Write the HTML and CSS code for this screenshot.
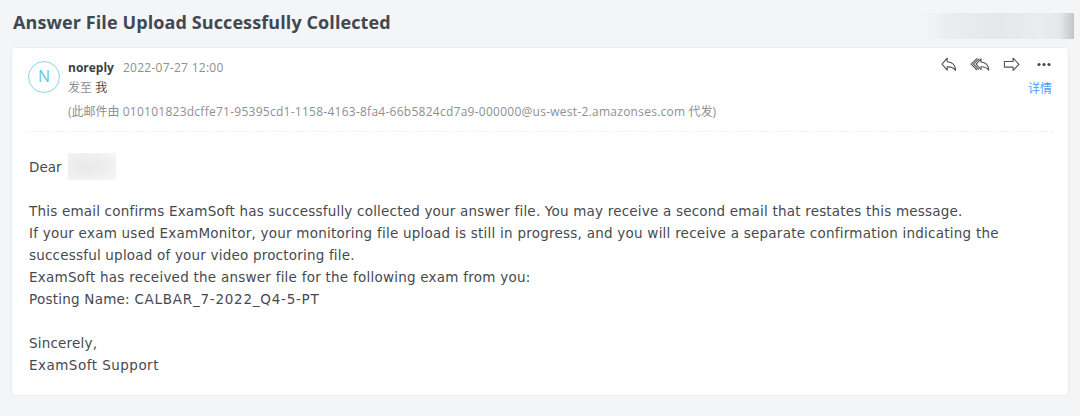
FILE: index.html
```html
<!DOCTYPE html>
<html lang="zh-CN">
<head>
    <meta charset="UTF-8">
    <meta name="viewport" content="width=device-width, initial-scale=1.0">
    <title>Answer File Upload Successfully Collected</title>
    <link rel="stylesheet" href="styles.css">
</head>
<body>
    <header class="mail-top">
        <h1 class="subject">Answer File Upload Successfully Collected</h1>
        <div class="account-mask"></div>
    </header>

    <main class="mail-card">
        <section class="mail-head">
            <div class="avatar">N</div>
            <div class="mail-info">
                <div class="sender-line"><span class="sender">noreply</span><span class="date">2022-07-27 12:00</span></div>
                <div class="to-line">发至 <span class="me">我</span></div>
                <div class="via-line">(此邮件由 <span class="address">010101823dcffe71-95395cd1-1158-4163-8fa4-66b5824cd7a9-000000@us-west-2.amazonses.com</span> 代发)</div>
            </div>
            <div class="mail-actions">
                <div class="icons">
                    <svg class="icon-reply" width="16" height="16" viewBox="0 0 16 16"><path d="M6.200 1.200 1 7.200l5.200 6V9.900c3.600-.3 6.300.8 8.400 3.400C14.500 8.800 11.600 5.200 6.200 4.700Z"/></svg>
                    <svg class="icon-reply-all" width="20" height="16" viewBox="0 0 20 16"><path d="M7 1.400 1.200 7.200 7 13M9 1.700 3.600 7.200 9 12.700"/><path d="M11 1.900 6.200 7.200 11 12.500V9.800c3.200-.2 5.600.8 7.700 3.400C18.500 8.600 15.700 5.300 11 5Z"/></svg>
                    <svg class="icon-forward" width="18" height="16" viewBox="0 0 18 16"><path d="M1.400 4.500h8.700V1.200l5.900 6.100-5.900 6.100v-3.300H1.400Z"/></svg>
                    <svg class="icon-more" width="14" height="16" viewBox="0 0 14 16"><circle cx="2" cy="7.500" r="1.600"/><circle cx="7" cy="7.500" r="1.600"/><circle cx="12" cy="7.500" r="1.600"/></svg>
                </div>
                <a class="details">详情</a>
            </div>
        </section>

        <section class="mail-body">
            <p class="greeting">Dear <span class="name-mask"></span></p>
            <p>This email confirms ExamSoft has successfully collected your answer file. You may receive a second email that restates this message.<br>
            <span class="wide">If your exam used ExamMonitor, your monitoring file upload is still in progress, and you will receive a separate confirmation indicating the</span> successful upload of your video proctoring file.<br>
            <span class="wide">ExamSoft has received the answer file for the following exam from you:</span><br>
            <span class="wide">Posting Name:</span> <span class="posting">CALBAR_7-2022_Q4-5-PT</span></p>
            <p>Sincerely,<br>
            <span class="signature">ExamSoft Support</span></p>
        </section>
    </main>
</body>
</html>
```
FILE: styles.css
```css
:root {
    --page: #f4f5f7;
    --text: #464a50;
    --muted: #8c9095;
    --link: #4a9cff;
    --cyan: #5fcbe3;
}
* {
    box-sizing: border-box;
}
body {
    margin: 0;
    height: 416px;
    overflow: hidden;
    background: var(--page);
    color: var(--text);
    font-family: "Open Sans", "Noto Sans CJK SC", sans-serif;
}
.mail-top {
    display: flex;
    justify-content: space-between;
    height: 47px;
    padding: 10px 6px 0 13px;
}
.subject {
    margin: 0;
    font-size: 18px;
    line-height: 25px;
    font-weight: 700;
    letter-spacing: 0.1px;
    color: #414852;
    white-space: nowrap;
}
.account-mask {
    width: 152px;
    height: 26px;
    margin-top: 3px;
    background: linear-gradient(to right, #f4f5f7 0%, #ebecee 18%, #e6e7e9 52%, #ebecee 78%, #e5e6e8 91%, #c3c4c6 100%);
}
.mail-card {
    width: 1058px;
    height: 349px;
    margin-left: 11px;
    padding: 0 17px;
    background: white;
    border: 1px solid #ebecee;
    border-radius: 4px;
}
.mail-head {
    display: flex;
    height: 84px;
    margin: 0 -2px 0 -3px;
    padding: 12px 1px 0 2px;
    border-bottom: 1px dashed #eff0f1;
}
.avatar {
    width: 32px;
    height: 32px;
    margin-top: 1px;
    border: 1px solid #88d9ea;
    border-radius: 50%;
    color: var(--cyan);
    font-size: 16px;
    line-height: 28px;
    text-align: center;
}
.mail-info {
    flex: 1;
    margin-left: 8px;
    font-size: 12px;
    color: var(--muted);
    white-space: nowrap;
}
.sender-line {
    height: 18px;
    line-height: 15px;
}
.sender {
    margin-right: 9px;
    color: #3c3f43;
    font-weight: 700;
}
.date {
    letter-spacing: 0.27px;
}
.to-line {
    height: 20px;
    line-height: 19px;
}
.me {
    color: #4b4e52;
}
.via-line {
    margin-top: 4px;
    line-height: 20px;
}
.address {
    letter-spacing: 0.26px;
}
.mail-actions {
    display: flex;
    flex-direction: column;
    align-items: flex-end;
}
.icons {
    display: flex;
    margin-top: -3px;
    margin-right: 1px;
}
.icons svg {
    fill: none;
    stroke: #505359;
    stroke-width: 1.1;
    stroke-linejoin: round;
}
.icons .icon-reply-all {
    margin-left: 13px;
}
.icons .icon-forward {
    margin-left: 13px;
}
.icons .icon-more {
    margin-left: 16px;
    fill: #45484d;
    stroke: none;
}
.details {
    margin-top: 7px;
    color: var(--link);
    font-size: 12px;
    line-height: 18px;
}
.mail-body {
    padding-top: 24px;
    font-family: "DejaVu Sans", sans-serif;
    font-size: 13.5px;
    line-height: 22px;
    letter-spacing: 0.2px;
}
.mail-body p {
    width: 990px;
    margin: 0 0 22px;
}
.mail-body .greeting {
    display: flex;
    height: 22px;
    letter-spacing: 0;
}
.name-mask {
    width: 48px;
    height: 27px;
    margin: -3px 0 0 6px;
    background: radial-gradient(ellipse at 40% 50%, #e9e9ea 0%, #eeeeef 45%, #f7f7f8 100%);
}
.wide {
    letter-spacing: 0.24px;
}
.posting {
    letter-spacing: 0.75px;
}
.signature {
    letter-spacing: 0.48px;
}
```
